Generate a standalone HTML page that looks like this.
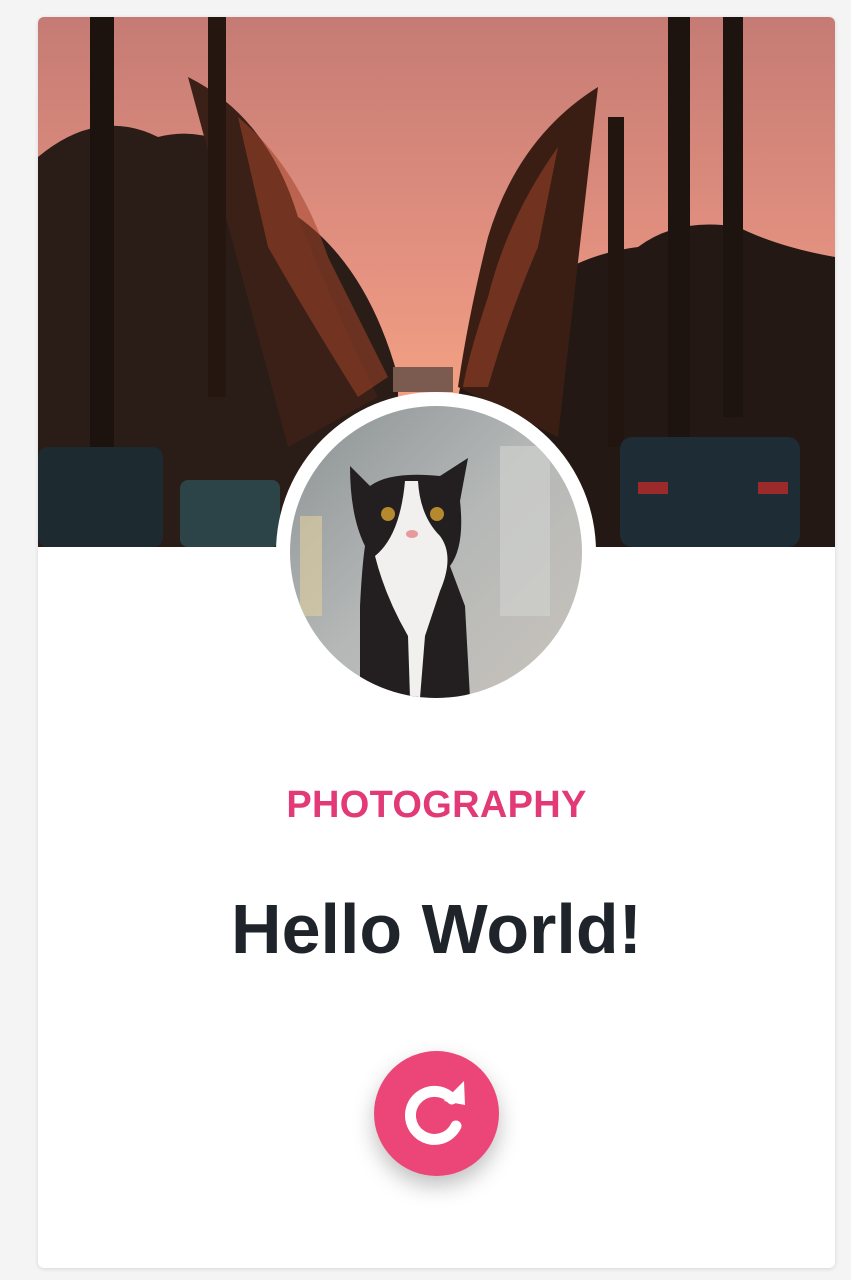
<!DOCTYPE html>
<html><head><meta charset="utf-8"><style>
html,body{margin:0;padding:0;background:#f4f4f4;width:851px;height:1280px;overflow:hidden;font-family:"Liberation Sans",Arial,sans-serif}
.card{position:absolute;left:38px;top:17px;width:797px;height:1251px;background:#fff;border-radius:6px;overflow:hidden;box-shadow:0 1px 4px rgba(0,0,0,.12)}
.hero{position:absolute;left:0;top:0;width:797px;height:530px}
.av{position:absolute;left:238px;top:375px;width:320px;height:320px;border-radius:50%;background:#fff;}
.av svg{position:absolute;left:14px;top:14px;border-radius:50%}
.cat{position:absolute;left:0;width:797px;text-align:center}
.t1{top:767px;color:#e23a76;font-weight:bold;font-size:38px;letter-spacing:.3px}
.t2{top:872px;color:#1f242b;font-weight:bold;font-size:70px}
.btn{position:absolute;left:336px;top:1034px;width:125px;height:125px;border-radius:50%;background:#ec4679;box-shadow:0 10px 22px rgba(0,0,0,.25)}
</style></head><body>
<div class="card">
<svg class="hero" width="797" height="530" viewBox="0 0 797 530">
<defs><linearGradient id="sky" x1="0" y1="0" x2="0" y2="1">
<stop offset="0" stop-color="#c57b74"/><stop offset=".5" stop-color="#e69381"/><stop offset=".75" stop-color="#f4a382"/><stop offset="1" stop-color="#6b3a2a"/></linearGradient></defs>
<rect width="797" height="530" fill="url(#sky)"/>
<path d="M0 140 Q60 90 120 120 Q200 100 260 200 Q330 250 360 360 L360 530 L0 530Z" fill="#2a1c17"/>
<path d="M797 240 Q740 230 700 210 Q640 200 600 230 Q520 240 470 300 Q430 330 420 380 L420 530 L797 530Z" fill="#231813"/>
<path d="M150 60 Q230 100 260 200 Q300 300 340 380 L250 430 Z" fill="#3a2016"/>
<path d="M560 70 Q480 120 450 220 Q430 300 420 370 L520 420 Z" fill="#3a1e14"/>
<path d="M200 100 Q260 150 290 240 Q330 320 350 360 L320 380 Q270 300 230 230Z" fill="#a0442a" opacity=".55"/>
<path d="M520 130 Q470 200 450 280 Q430 340 425 370 L450 370 Q470 300 500 230Z" fill="#a0442a" opacity=".55"/>
<rect x="52" y="0" width="24" height="440" fill="#1c120e"/>
<rect x="170" y="0" width="18" height="380" fill="#25160f"/>
<rect x="630" y="0" width="22" height="430" fill="#1d130f"/>
<rect x="685" y="0" width="20" height="400" fill="#1d130f"/>
<rect x="570" y="100" width="16" height="330" fill="#22150f"/>
<rect x="355" y="350" width="60" height="25" fill="#7b5a50"/>
<rect x="0" y="430" width="125" height="100" rx="10" fill="#1d2a30"/>
<rect x="142" y="463" width="100" height="67" rx="8" fill="#2c4448"/>
<rect x="582" y="420" width="180" height="110" rx="12" fill="#1e2d35"/>
<rect x="600" y="465" width="30" height="12" fill="#9b2b2b"/>
<rect x="720" y="465" width="30" height="12" fill="#9b2b2b"/>
</svg>
<div class="av"><svg width="292" height="292" viewBox="0 0 292 292">
<defs><linearGradient id="bg" x1="0" y1="0" x2="1" y2="1"><stop offset="0" stop-color="#8c9294"/><stop offset=".5" stop-color="#b5b8b7"/><stop offset="1" stop-color="#c9c3bc"/></linearGradient></defs>
<rect width="292" height="292" fill="url(#bg)"/>
<rect x="210" y="40" width="50" height="170" fill="#cfd0cd" opacity=".7"/>
<rect x="10" y="110" width="22" height="100" fill="#d9c9a0" opacity=".7"/>
<path d="M60 60 L80 80 Q100 65 150 70 L178 52 L170 95 Q175 140 160 160 L175 200 L180 292 L70 292 L70 200 Q72 160 75 140 Q60 110 60 60Z" fill="#231f20"/>
<path d="M115 75 L128 75 Q130 110 150 130 Q165 150 150 185 L135 230 L130 292 L120 292 L118 230 Q95 190 85 150 Q110 130 115 75Z" fill="#f1f0ee"/>
<circle cx="98" cy="108" r="7" fill="#b5892d"/><circle cx="147" cy="108" r="7" fill="#b5892d"/>
<ellipse cx="122" cy="128" rx="6" ry="4" fill="#e79a9c"/>
</svg></div>
<div class="cat t1">PHOTOGRAPHY</div>
<div class="cat t2">Hello World!</div>
<div class="btn"><svg width="125" height="125" viewBox="0 0 125 125">
<path d="M78 48 A24 24 0 1 0 82 75" fill="none" stroke="#fff" stroke-width="11" stroke-linecap="round"/>
<path d="M70 50 L90 30 L91 54 Z" fill="#fff"/>
</svg></div>
</div>
</body></html>
